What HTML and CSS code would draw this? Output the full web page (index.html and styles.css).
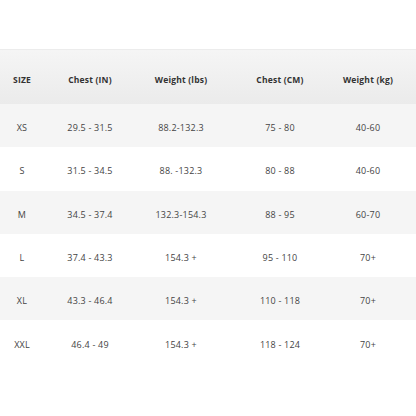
FILE: index.html
```html
<!DOCTYPE html>
<html>
<head>
<meta charset="utf-8">
<link rel="stylesheet" href="styles.css">
</head>
<body>
<div class="spacer"></div>
<div class="table">
  <div class="row head">
    <div class="cell">SIZE</div>
    <div class="cell">Chest (IN)</div>
    <div class="cell">Weight (lbs)</div>
    <div class="cell">Chest (CM)</div>
    <div class="cell">Weight (kg)</div>
    <div class="cell"></div>
  </div>
  <div class="row alt">
    <div class="cell">XS</div>
    <div class="cell">29.5 - 31.5</div>
    <div class="cell">88.2-132.3</div>
    <div class="cell">75 - 80</div>
    <div class="cell">40-60</div>
    <div class="cell"></div>
  </div>
  <div class="row">
    <div class="cell">S</div>
    <div class="cell">31.5 - 34.5</div>
    <div class="cell">88. -132.3</div>
    <div class="cell">80 - 88</div>
    <div class="cell">40-60</div>
    <div class="cell"></div>
  </div>
  <div class="row alt">
    <div class="cell">M</div>
    <div class="cell">34.5 - 37.4</div>
    <div class="cell">132.3-154.3</div>
    <div class="cell">88 - 95</div>
    <div class="cell">60-70</div>
    <div class="cell"></div>
  </div>
  <div class="row">
    <div class="cell">L</div>
    <div class="cell">37.4 - 43.3</div>
    <div class="cell">154.3 +</div>
    <div class="cell">95 - 110</div>
    <div class="cell">70+</div>
    <div class="cell"></div>
  </div>
  <div class="row alt">
    <div class="cell">XL</div>
    <div class="cell">43.3 - 46.4</div>
    <div class="cell">154.3 +</div>
    <div class="cell">110 - 118</div>
    <div class="cell">70+</div>
    <div class="cell"></div>
  </div>
  <div class="row">
    <div class="cell">XXL</div>
    <div class="cell">46.4 - 49</div>
    <div class="cell">154.3 +</div>
    <div class="cell">118 - 124</div>
    <div class="cell">70+</div>
    <div class="cell"></div>
  </div>
</div>
</body>
</html>
```
FILE: styles.css
```css
html, body {
  margin: 0;
  padding: 0;
  background: #ffffff;
}
body {
  font-family: "Open Sans", "Noto Sans", sans-serif;
  font-size: 9px;
  color: #444;
}
.spacer {
  height: 49px;
}
.table {
  display: flex;
  flex-direction: column;
}
.row {
  display: grid;
  grid-template-columns: 44px 92px 90px 108px 68px 14px;
  height: 43.3px;
  align-items: center;
}
.row .cell {
  text-align: center;
  padding-top: 4px;
  letter-spacing: 0.2px;
}
.row.alt {
  background: #f5f5f5;
}
.row.head {
  height: 55px;
  background: linear-gradient(#f5f5f5, #ebebeb);
  border-top: 1px solid #ececec;
  box-sizing: border-box;
  font-weight: 700;
  color: #333;
  font-size: 8.5px;
}
.row.head .cell {
  padding-top: 4px;
}
```
